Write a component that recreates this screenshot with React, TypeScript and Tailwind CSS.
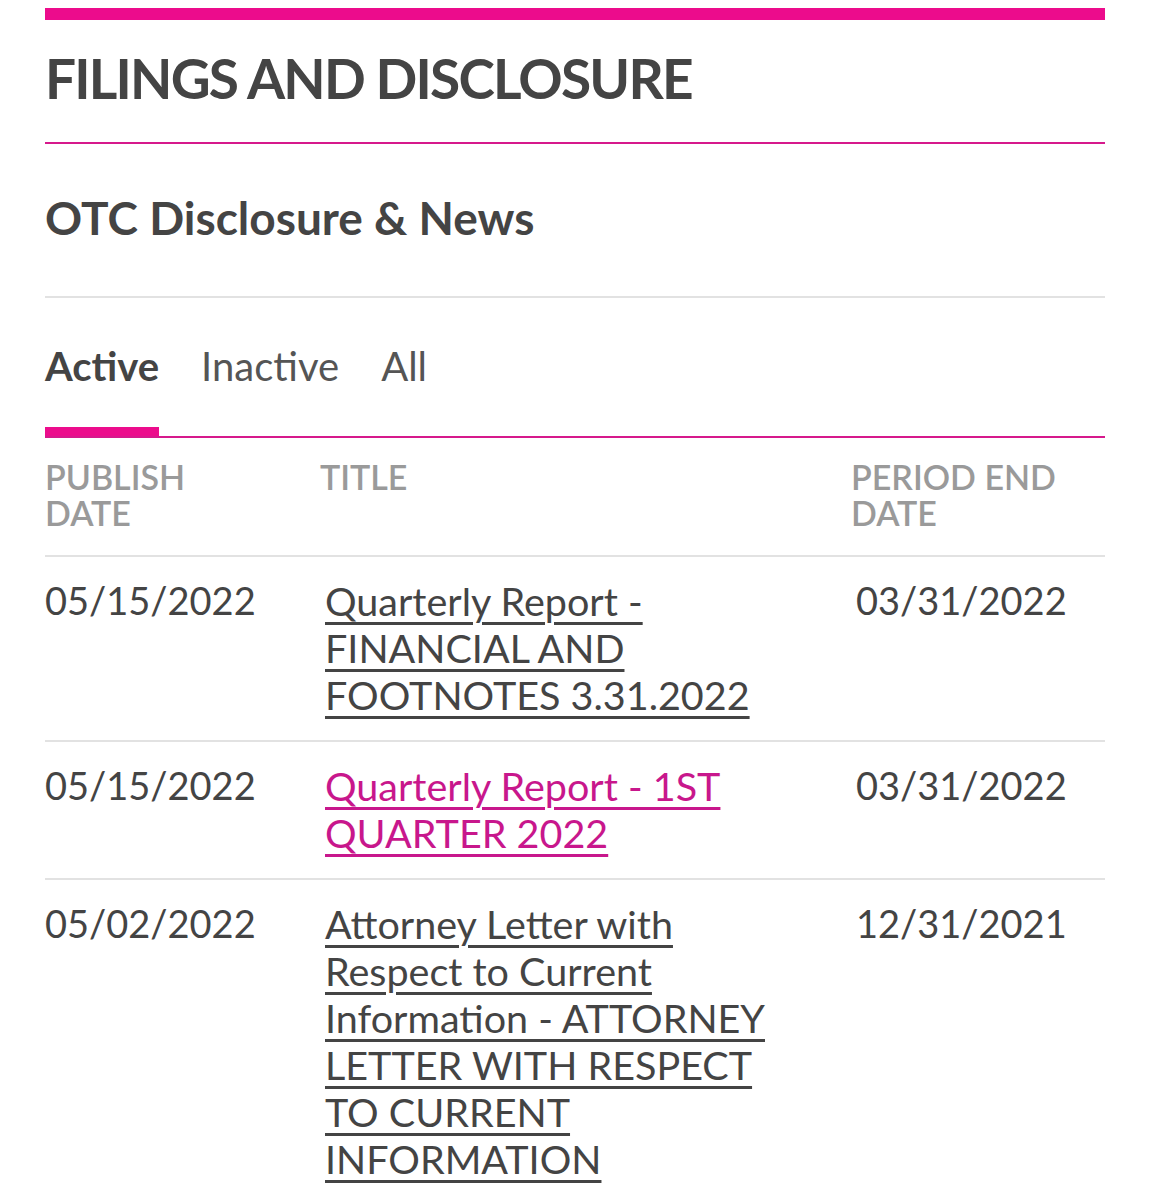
const rows = [
  {
    published: '05/15/2022',
    title: 'Quarterly Report - FINANCIAL AND FOOTNOTES 3.31.2022',
    periodEnd: '03/31/2022',
    visited: false,
  },
  {
    published: '05/15/2022',
    title: 'Quarterly Report - 1ST QUARTER 2022',
    periodEnd: '03/31/2022',
    visited: true,
  },
  {
    published: '05/02/2022',
    title:
      'Attorney Letter with Respect to Current Information - ATTORNEY LETTER WITH RESPECT TO CURRENT INFORMATION',
    periodEnd: '12/31/2021',
    visited: false,
  },
]

const tabs = ['Active', 'Inactive', 'All']

export default function App() {
  return (
    <div
      className="min-h-[1200px] overflow-hidden bg-white px-[45px] pt-[8px] text-[#444]"
      style={{ fontFamily: 'Lato, "Noto Sans", sans-serif' }}
    >
      <div className="h-[12px] bg-[#ec0c8c]" />

      <h1 className="mt-[31px] text-[55px] font-bold leading-[55px] tracking-[-1.8px]">
        FILINGS AND DISCLOSURE
      </h1>
      <div className="mt-[36px] h-[2px] bg-[#d6198c]" />

      <h2 className="mt-[50px] text-[46px] font-bold leading-[47px]">OTC Disclosure &amp; News</h2>
      <div className="mt-[55px] h-[2px] bg-[#e2e2e2]" />

      <div className="mt-[46px] flex gap-[42px]">
        {tabs.map((t, i) => (
          <div key={t} className="flex flex-col">
            <span
              className={`text-[40px] leading-[44px] ${i === 0 ? 'font-bold text-[#444]' : 'font-normal text-[#555]'}`}
            >
              {t}
            </span>
            {/* only the selected tab carries the thick bar */}
            <div className={`mt-[39px] h-[9px] ${i === 0 ? 'bg-[#ec0c8c]' : 'bg-transparent'}`} />
          </div>
        ))}
      </div>
      <div className="h-[2px] bg-[#d6198c]" />

      <table className="w-full table-fixed border-collapse">
        <colgroup>
          <col className="w-[275px]" />
          <col className="w-[531px]" />
          <col />
        </colgroup>
        <thead>
          <tr className="border-b-2 border-[#e2e2e2] align-top text-[34px] uppercase leading-[36px] text-[#9a9a9a]">
            <th className="pb-[24px] pr-[100px] pt-[21px] text-left font-semibold">Publish Date</th>
            <th className="pb-[24px] pt-[21px] text-left font-semibold">Title</th>
            <th className="pb-[24px] pt-[21px] text-left font-semibold">Period End Date</th>
          </tr>
        </thead>
        <tbody>
          {rows.map((r, i) => (
            <tr
              key={i}
              className="border-b-2 border-[#e2e2e2] align-top text-[38px] leading-[47px]"
            >
              <td className="pb-[22px] pt-[20px]">{r.published}</td>
              <td className="pb-[22px] pl-[5px] pr-[50px] pt-[20px] text-[39.5px]">
                <a
                  href="#"
                  className={`underline decoration-[2.5px] underline-offset-[6px] ${r.visited ? 'text-[#c8178c]' : 'text-[#444]'}`}
                >
                  {r.title}
                </a>
              </td>
              <td className="pb-[22px] pl-[5px] pt-[20px]">{r.periodEnd}</td>
            </tr>
          ))}
        </tbody>
      </table>
    </div>
  )
}
